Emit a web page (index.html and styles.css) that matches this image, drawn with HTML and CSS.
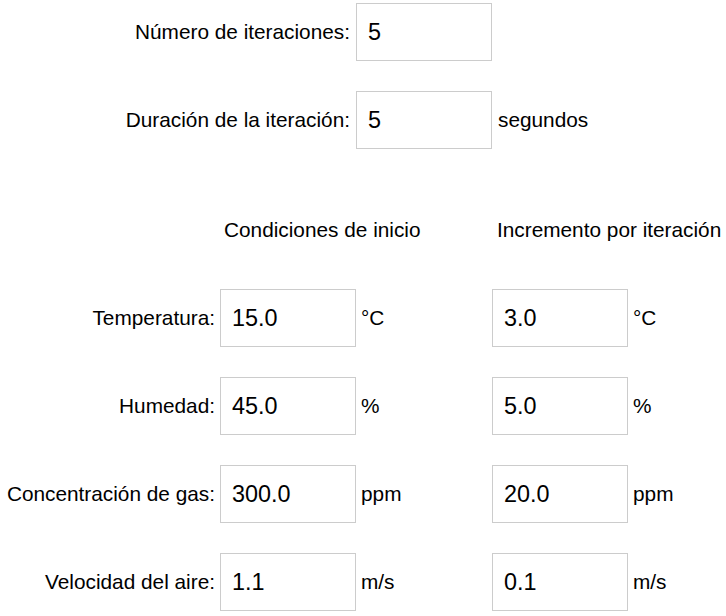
FILE: index.html
```html
<!DOCTYPE html>
<html lang="es">
<head>
<meta charset="utf-8">
<title>Iteraciones</title>
<link rel="stylesheet" href="styles.css">
</head>
<body>
<div class="page">
  <div class="top-grid">
    <label class="lbl" for="n-iter">Número de iteraciones:</label>
    <input class="field" id="n-iter" type="text" value="5">
    <span class="unit"></span>

    <label class="lbl" for="dur">Duración de la iteración:</label>
    <input class="field" id="dur" type="text" value="5">
    <span class="unit">segundos</span>
  </div>

  <div class="cond-grid">
    <span class="blank"></span>
    <span class="head head-a">Condiciones de inicio</span>
    <span class="head head-b">Incremento por iteración</span>

    <label class="lbl">Temperatura:</label>
    <input class="field field-a" type="text" value="15.0">
    <span class="unit">°C</span>
    <input class="field field-b" type="text" value="3.0">
    <span class="unit">°C</span>

    <label class="lbl">Humedad:</label>
    <input class="field field-a" type="text" value="45.0">
    <span class="unit">%</span>
    <input class="field field-b" type="text" value="5.0">
    <span class="unit">%</span>

    <label class="lbl">Concentración de gas:</label>
    <input class="field field-a" type="text" value="300.0">
    <span class="unit">ppm</span>
    <input class="field field-b" type="text" value="20.0">
    <span class="unit">ppm</span>

    <label class="lbl">Velocidad del aire:</label>
    <input class="field field-a" type="text" value="1.1">
    <span class="unit">m/s</span>
    <input class="field field-b" type="text" value="0.1">
    <span class="unit">m/s</span>
  </div>
</div>
</body>
</html>
```

FILE: styles.css
```css
html, body {
  margin: 0;
  padding: 0;
  background: #ffffff;
}

body {
  font-family: "Liberation Sans", Arial, sans-serif;
  font-size: 20.8px;
  color: #000000;
}

.page {
  width: 726px;
  padding-top: 3px;
  overflow: hidden;
}

.lbl {
  text-align: right;
  white-space: nowrap;
}

.unit {
  white-space: nowrap;
}

.field {
  box-sizing: border-box;
  width: 136px;
  height: 58px;
  margin: 0;
  padding: 0 11px;
  border: 1px solid #cccccc;
  border-radius: 0;
  background: #ffffff;
  font-family: "Liberation Sans", Arial, sans-serif;
  font-size: 23.4px;
  color: #000000;
  outline: none;
}

/* top block */
.top-grid {
  display: grid;
  grid-template-columns: 350px 142px auto;
  grid-auto-rows: 58px;
  row-gap: 30px;
  align-items: center;
}

.top-grid .field {
  margin-left: 6px;
}

.top-grid .unit {
  padding-left: 6px;
}

/* conditions block */
.cond-grid {
  display: grid;
  grid-template-columns: 215px 141px 136px 136px auto;
  grid-template-rows: 41px;
  grid-auto-rows: 58px;
  row-gap: 30px;
  align-items: center;
  margin-top: 69px;
}

.cond-grid .head {
  white-space: nowrap;
  align-self: start;
  line-height: 23px;
}

.head-a {
  grid-column: 2 / 4;
  padding-left: 9px;
}

.head-b {
  grid-column: 4 / 6;
  padding-left: 5px;
}

.field-a {
  margin-left: 5px;
}

.cond-grid .unit {
  padding-left: 5px;
}
```
